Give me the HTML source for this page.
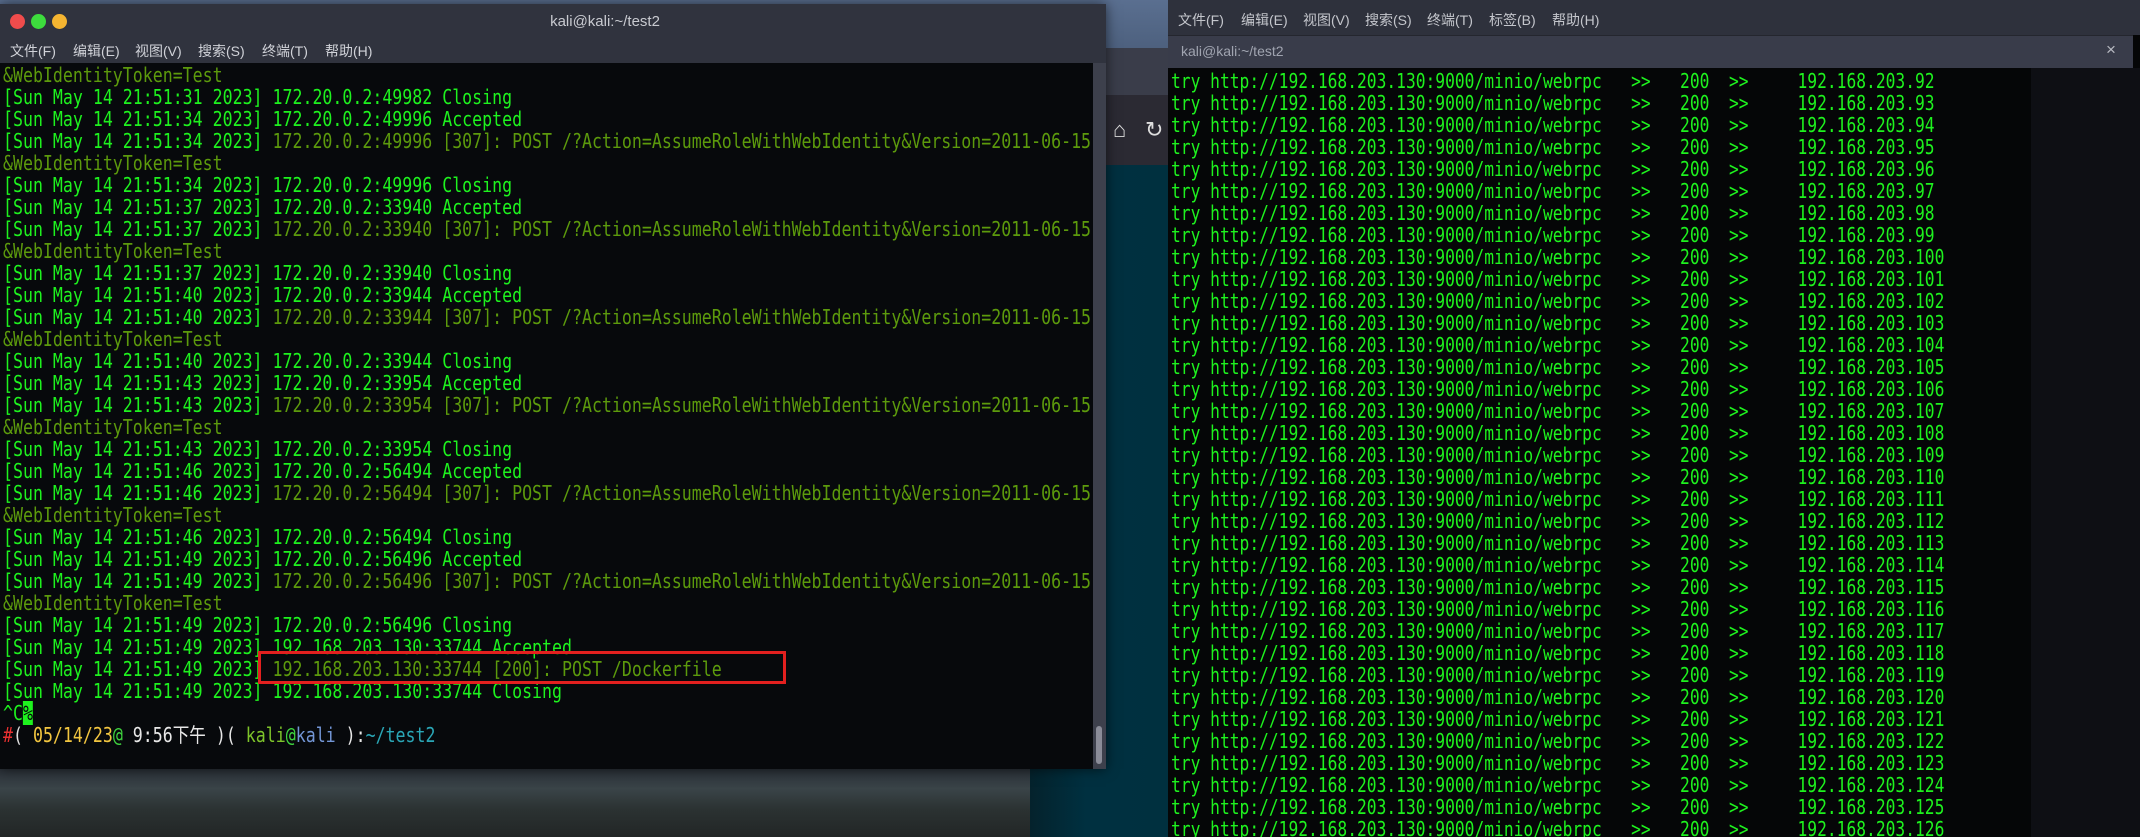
<!DOCTYPE html>
<html><head><meta charset="utf-8"><style>
*{margin:0;padding:0;box-sizing:border-box}
html,body{width:2140px;height:837px;overflow:hidden}
body{position:relative;background:linear-gradient(180deg,#5a6f90 0px,#4a5d7a 60px,#1b2028 60px,#1b2028 837px);font-family:"Liberation Sans","Noto Sans CJK SC",sans-serif}
.desk{position:absolute;left:0;top:768px;width:1040px;height:69px;background:linear-gradient(180deg,#2a3038 0%,#3a4448 30%,#2b3232 60%,#222626 100%)}
.desk2{position:absolute;left:1030px;top:140px;width:140px;height:697px;background:linear-gradient(90deg,#04222c,#003040 40%,#00303f)}
.brow{position:absolute;left:1105px;top:48px;width:70px;height:50px;background:#3a3d4a}
.brow2{position:absolute;left:1105px;top:95px;width:70px;height:70px;background:#2b2a33}
.win{position:absolute;left:0;top:4px;width:1106px;height:765px;background:#07090c;box-shadow:0 0 12px rgba(0,0,0,.6)}
.tb{position:absolute;left:0;top:0;width:1106px;height:59px;background:#30333e}
.dot{position:absolute;top:10px;width:15px;height:15px;border-radius:50%}
.title{position:absolute;left:0;width:1210px;text-align:center;top:9px;color:#c8cad0;font-size:15px}
.menu{position:absolute;top:37px;color:#d0d2d8;font-size:14px}
.sb{position:absolute;left:1093px;top:59px;width:13px;height:706px;background:#3d404c}
.thumb{position:absolute;left:1096px;top:726px;width:6px;height:38px;border-radius:3px;background:#8a8c98}
.term{position:absolute;font-family:"DejaVu Sans Mono","Liberation Mono",monospace;font-size:20px;line-height:22px;white-space:pre;transform-origin:0 0;color:#1ef21e}
.d{color:#5c9a0c}
.rbox{position:absolute;left:258px;top:651px;width:528px;height:33px;border:3px solid #e3201f}
.rw{position:absolute;left:1168px;top:0;width:972px;height:837px;background:#050607;overflow:hidden}
.rw .rest{position:absolute;left:863px;top:68px;width:109px;height:769px;background:#0e0f14}
.rmenu{position:absolute;left:0;top:0;width:972px;height:35px;background:#2e313c}
.rtab{position:absolute;left:0;top:35px;width:965px;height:33px;background:#393c4a;border-top:1px solid #24262e}
</style></head><body>
<div class="desk"></div>
<div class="desk2"></div>
<div class="brow"></div>
<div class="brow2"><span style="position:absolute;left:8px;top:22px;color:#ddd;font-size:22px">⌂</span><span style="position:absolute;left:40px;top:22px;color:#ddd;font-size:22px">↻</span></div>

<div class="win">
<div class="tb">
<div class="dot" style="left:10px;background:#f04c4c"></div>
<div class="dot" style="left:31px;background:#3ddc3d"></div>
<div class="dot" style="left:52px;background:#f5b531"></div>
<div class="title">kali@kali:~/test2</div>
<div class="menu" style="left:10px">文件(F)</div>
<div class="menu" style="left:73px">编辑(E)</div>
<div class="menu" style="left:135px">视图(V)</div>
<div class="menu" style="left:198px">搜索(S)</div>
<div class="menu" style="left:262px">终端(T)</div>
<div class="menu" style="left:325px">帮助(H)</div>
</div>
<div class="sb"></div><div class="thumb" style="top:722px"></div>
<div class="term" style="left:3px;top:60px;transform:scaleX(0.829)"><span class="d">&amp;WebIdentityToken=Test</span>
[Sun May 14 21:51:31 2023] 172.20.0.2:49982 Closing
[Sun May 14 21:51:34 2023] 172.20.0.2:49996 Accepted
[Sun May 14 21:51:34 2023] <span class="d">172.20.0.2:49996 [307]: POST /?Action=AssumeRoleWithWebIdentity&amp;Version=2011-06-15</span>
<span class="d">&amp;WebIdentityToken=Test</span>
[Sun May 14 21:51:34 2023] 172.20.0.2:49996 Closing
[Sun May 14 21:51:37 2023] 172.20.0.2:33940 Accepted
[Sun May 14 21:51:37 2023] <span class="d">172.20.0.2:33940 [307]: POST /?Action=AssumeRoleWithWebIdentity&amp;Version=2011-06-15</span>
<span class="d">&amp;WebIdentityToken=Test</span>
[Sun May 14 21:51:37 2023] 172.20.0.2:33940 Closing
[Sun May 14 21:51:40 2023] 172.20.0.2:33944 Accepted
[Sun May 14 21:51:40 2023] <span class="d">172.20.0.2:33944 [307]: POST /?Action=AssumeRoleWithWebIdentity&amp;Version=2011-06-15</span>
<span class="d">&amp;WebIdentityToken=Test</span>
[Sun May 14 21:51:40 2023] 172.20.0.2:33944 Closing
[Sun May 14 21:51:43 2023] 172.20.0.2:33954 Accepted
[Sun May 14 21:51:43 2023] <span class="d">172.20.0.2:33954 [307]: POST /?Action=AssumeRoleWithWebIdentity&amp;Version=2011-06-15</span>
<span class="d">&amp;WebIdentityToken=Test</span>
[Sun May 14 21:51:43 2023] 172.20.0.2:33954 Closing
[Sun May 14 21:51:46 2023] 172.20.0.2:56494 Accepted
[Sun May 14 21:51:46 2023] <span class="d">172.20.0.2:56494 [307]: POST /?Action=AssumeRoleWithWebIdentity&amp;Version=2011-06-15</span>
<span class="d">&amp;WebIdentityToken=Test</span>
[Sun May 14 21:51:46 2023] 172.20.0.2:56494 Closing
[Sun May 14 21:51:49 2023] 172.20.0.2:56496 Accepted
[Sun May 14 21:51:49 2023] <span class="d">172.20.0.2:56496 [307]: POST /?Action=AssumeRoleWithWebIdentity&amp;Version=2011-06-15</span>
<span class="d">&amp;WebIdentityToken=Test</span>
[Sun May 14 21:51:49 2023] 172.20.0.2:56496 Closing
[Sun May 14 21:51:49 2023] 192.168.203.130:33744 Accepted
[Sun May 14 21:51:49 2023] <span class="d">192.168.203.130:33744 [200]: POST /Dockerfile</span>
[Sun May 14 21:51:49 2023] 192.168.203.130:33744 Closing
^C<span style="background:#1ef21e;color:#07090c">%</span>
<span style="color:#e83030">#</span><span style="color:#e0e0e0">(</span> <span style="color:#f2c640">05/14/23</span><span style="color:#3fd43f">@</span><span style="color:#e8e8e8"> 9:56下午 )(</span> <span style="color:#7ec42a">kali</span><span style="color:#3fd43f">@</span><span style="color:#7396d6">kali</span><span style="color:#e8e8e8"> ):</span><span style="color:#2aa6b6">~/test2</span></div>
</div>
<div class="rbox"></div>

<div class="rw">
<div class="rest"></div>
<div class="rmenu">
<span class="menu" style="left:10px;top:10px;color:#c4c6cc">文件(F)</span>
<span class="menu" style="left:73px;top:10px;color:#c4c6cc">编辑(E)</span>
<span class="menu" style="left:135px;top:10px;color:#c4c6cc">视图(V)</span>
<span class="menu" style="left:197px;top:10px;color:#c4c6cc">搜索(S)</span>
<span class="menu" style="left:259px;top:10px;color:#c4c6cc">终端(T)</span>
<span class="menu" style="left:321px;top:10px;color:#c4c6cc">标签(B)</span>
<span class="menu" style="left:384px;top:10px;color:#c4c6cc">帮助(H)</span>
</div>
<div class="rtab"><span style="position:absolute;left:13px;top:7px;font-size:14px;color:#a0a4b0">kali@kali:~/test2</span><span style="position:absolute;left:938px;top:4px;font-size:17px;color:#b8bac2">×</span></div>
<div class="term" style="left:3px;top:70px;transform:scaleX(0.813)">try http://192.168.203.130:9000/minio/webrpc   &gt;&gt;   200  &gt;&gt;     192.168.203.92
try http://192.168.203.130:9000/minio/webrpc   &gt;&gt;   200  &gt;&gt;     192.168.203.93
try http://192.168.203.130:9000/minio/webrpc   &gt;&gt;   200  &gt;&gt;     192.168.203.94
try http://192.168.203.130:9000/minio/webrpc   &gt;&gt;   200  &gt;&gt;     192.168.203.95
try http://192.168.203.130:9000/minio/webrpc   &gt;&gt;   200  &gt;&gt;     192.168.203.96
try http://192.168.203.130:9000/minio/webrpc   &gt;&gt;   200  &gt;&gt;     192.168.203.97
try http://192.168.203.130:9000/minio/webrpc   &gt;&gt;   200  &gt;&gt;     192.168.203.98
try http://192.168.203.130:9000/minio/webrpc   &gt;&gt;   200  &gt;&gt;     192.168.203.99
try http://192.168.203.130:9000/minio/webrpc   &gt;&gt;   200  &gt;&gt;     192.168.203.100
try http://192.168.203.130:9000/minio/webrpc   &gt;&gt;   200  &gt;&gt;     192.168.203.101
try http://192.168.203.130:9000/minio/webrpc   &gt;&gt;   200  &gt;&gt;     192.168.203.102
try http://192.168.203.130:9000/minio/webrpc   &gt;&gt;   200  &gt;&gt;     192.168.203.103
try http://192.168.203.130:9000/minio/webrpc   &gt;&gt;   200  &gt;&gt;     192.168.203.104
try http://192.168.203.130:9000/minio/webrpc   &gt;&gt;   200  &gt;&gt;     192.168.203.105
try http://192.168.203.130:9000/minio/webrpc   &gt;&gt;   200  &gt;&gt;     192.168.203.106
try http://192.168.203.130:9000/minio/webrpc   &gt;&gt;   200  &gt;&gt;     192.168.203.107
try http://192.168.203.130:9000/minio/webrpc   &gt;&gt;   200  &gt;&gt;     192.168.203.108
try http://192.168.203.130:9000/minio/webrpc   &gt;&gt;   200  &gt;&gt;     192.168.203.109
try http://192.168.203.130:9000/minio/webrpc   &gt;&gt;   200  &gt;&gt;     192.168.203.110
try http://192.168.203.130:9000/minio/webrpc   &gt;&gt;   200  &gt;&gt;     192.168.203.111
try http://192.168.203.130:9000/minio/webrpc   &gt;&gt;   200  &gt;&gt;     192.168.203.112
try http://192.168.203.130:9000/minio/webrpc   &gt;&gt;   200  &gt;&gt;     192.168.203.113
try http://192.168.203.130:9000/minio/webrpc   &gt;&gt;   200  &gt;&gt;     192.168.203.114
try http://192.168.203.130:9000/minio/webrpc   &gt;&gt;   200  &gt;&gt;     192.168.203.115
try http://192.168.203.130:9000/minio/webrpc   &gt;&gt;   200  &gt;&gt;     192.168.203.116
try http://192.168.203.130:9000/minio/webrpc   &gt;&gt;   200  &gt;&gt;     192.168.203.117
try http://192.168.203.130:9000/minio/webrpc   &gt;&gt;   200  &gt;&gt;     192.168.203.118
try http://192.168.203.130:9000/minio/webrpc   &gt;&gt;   200  &gt;&gt;     192.168.203.119
try http://192.168.203.130:9000/minio/webrpc   &gt;&gt;   200  &gt;&gt;     192.168.203.120
try http://192.168.203.130:9000/minio/webrpc   &gt;&gt;   200  &gt;&gt;     192.168.203.121
try http://192.168.203.130:9000/minio/webrpc   &gt;&gt;   200  &gt;&gt;     192.168.203.122
try http://192.168.203.130:9000/minio/webrpc   &gt;&gt;   200  &gt;&gt;     192.168.203.123
try http://192.168.203.130:9000/minio/webrpc   &gt;&gt;   200  &gt;&gt;     192.168.203.124
try http://192.168.203.130:9000/minio/webrpc   &gt;&gt;   200  &gt;&gt;     192.168.203.125
try http://192.168.203.130:9000/minio/webrpc   &gt;&gt;   200  &gt;&gt;     192.168.203.126</div>
</div>
</body></html>
